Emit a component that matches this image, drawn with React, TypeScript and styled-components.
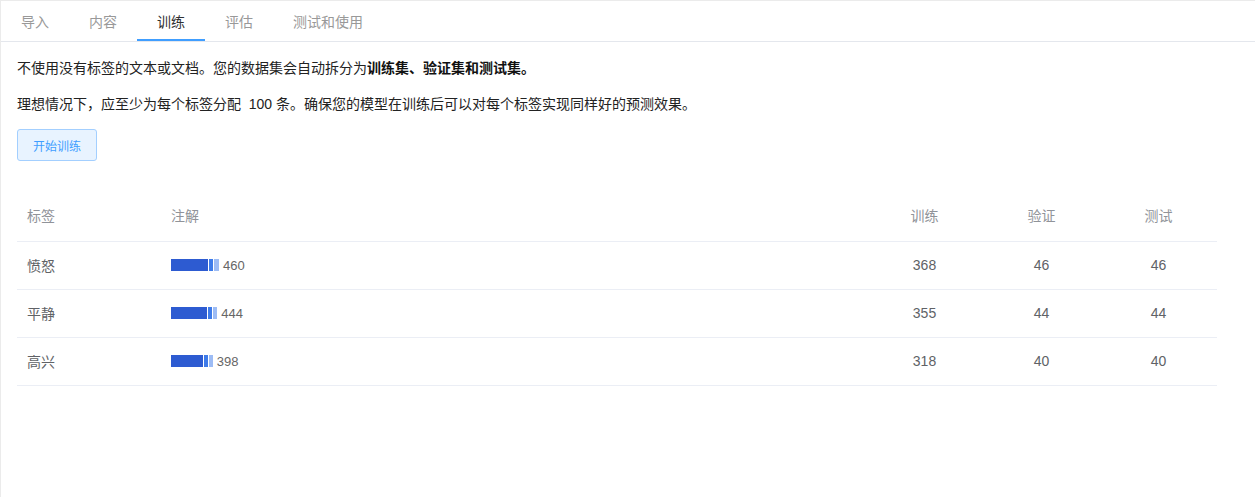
import React from "react";
import styled, { createGlobalStyle } from "styled-components";

const GlobalStyle = createGlobalStyle`
  html, body {
    margin: 0;
    padding: 0;
    background: #fff;
  }
  body {
    font-family: "Liberation Sans", "Noto Sans CJK SC", sans-serif;
    color: #333;
  }
`;

type Row = {
  label: string;
  total: number;
  train: number;
  valid: number;
  test: number;
};

const rows: Row[] = [
  { label: "愤怒", total: 460, train: 368, valid: 46, test: 46 },
  { label: "平静", total: 444, train: 355, valid: 44, test: 44 },
  { label: "高兴", total: 398, train: 318, valid: 40, test: 40 },
];

const tabs = ["导入", "内容", "训练", "评估", "测试和使用"];

const SCALE = 0.1;

export default function App() {
  return (
    <>
      <GlobalStyle />
      <Page>
        <TabBar>
          {tabs.map((tab) => (
            <Tab key={tab} $active={tab === "训练"}>
              {tab}
            </Tab>
          ))}
        </TabBar>
        <Content>
          <Paragraph>
            不使用没有标签的文本或文档。您的数据集会自动拆分为
            <Strong>训练集、验证集和测试集。</Strong>
          </Paragraph>
          <Paragraph>
            理想情况下，应至少为每个标签分配&nbsp;&nbsp;100&nbsp;条。确保您的模型在训练后可以对每个标签实现同样好的预测效果。
          </Paragraph>
          <TrainButton>开始训练</TrainButton>
          <Table>
            <colgroup>
              <col style={{ width: 144 }} />
              <col />
              <col style={{ width: 117 }} />
              <col style={{ width: 117 }} />
              <col style={{ width: 117 }} />
            </colgroup>
            <thead>
              <tr>
                <Th>标签</Th>
                <Th>注解</Th>
                <Th $center>训练</Th>
                <Th $center>验证</Th>
                <Th $center>测试</Th>
              </tr>
            </thead>
            <tbody>
              {rows.map((row) => (
                <tr key={row.label}>
                  <Td>{row.label}</Td>
                  <Td>
                    <BarWrap>
                      <Segment $color="#2d5bd1" style={{ width: row.train * SCALE }} />
                      <Segment $color="#3e7be9" style={{ width: row.valid * SCALE }} />
                      <Segment $color="#9dbcf5" style={{ width: row.test * SCALE }} />
                      <Total>{row.total}</Total>
                    </BarWrap>
                  </Td>
                  <Td $center>{row.train}</Td>
                  <Td $center>{row.valid}</Td>
                  <Td $center>{row.test}</Td>
                </tr>
              ))}
            </tbody>
          </Table>
        </Content>
      </Page>
    </>
  );
}

const Page = styled.div`
  min-height: 100vh;
  box-sizing: border-box;
  border-left: 1px solid #ebebeb;
  border-top: 1px solid #ebebeb;
`;

const TabBar = styled.div`
  display: flex;
  border-bottom: 1px solid #e4e7ed;
`;

const Tab = styled.div<{ $active?: boolean }>`
  height: 40px;
  box-sizing: border-box;
  padding: 0 20px;
  display: flex;
  align-items: center;
  font-size: 14px;
  color: ${({ $active }) => ($active ? "#303133" : "#999")};
  border-bottom: 2px solid ${({ $active }) => ($active ? "#409eff" : "transparent")};
  padding-top: 1px;
`;

const Content = styled.div`
  padding: 15px 16px;
`;

const Paragraph = styled.p`
  margin: 0 0 14px;
  font-size: 14px;
  line-height: 22px;
  color: #222;
`;

const Strong = styled.span`
  font-weight: 600;
  color: #111;
`;

const TrainButton = styled.button`
  display: block;
  width: 80px;
  height: 32px;
  padding: 0;
  margin-top: 1px;
  background: #e8f3ff;
  border: 1px solid #a3cfff;
  border-radius: 3px;
  color: #409eff;
  font-family: inherit;
  font-size: 12px;
  cursor: pointer;
`;

const Table = styled.table`
  margin-top: 32px;
  width: 1200px;
  border-collapse: collapse;
  table-layout: fixed;
`;

const Th = styled.th<{ $center?: boolean }>`
  height: 44px;
  padding: 0 10px 4px;
  font-size: 14px;
  font-weight: normal;
  color: #909399;
  text-align: ${({ $center }) => ($center ? "center" : "left")};
  border-bottom: 1px solid #ebeef5;
`;

const Td = styled.td<{ $center?: boolean }>`
  height: 46px;
  padding: 0 10px 1px;
  font-size: 14px;
  color: #606266;
  text-align: ${({ $center }) => ($center ? "center" : "left")};
  border-bottom: 1px solid #ebeef5;
`;

const BarWrap = styled.div`
  display: flex;
  align-items: center;
`;

const Segment = styled.span<{ $color: string }>`
  display: block;
  height: 12px;
  background: ${({ $color }) => $color};
  & + & {
    margin-left: 1px;
  }
`;

const Total = styled.span`
  margin-left: 4px;
  font-size: 13px;
  color: #666;
`;
